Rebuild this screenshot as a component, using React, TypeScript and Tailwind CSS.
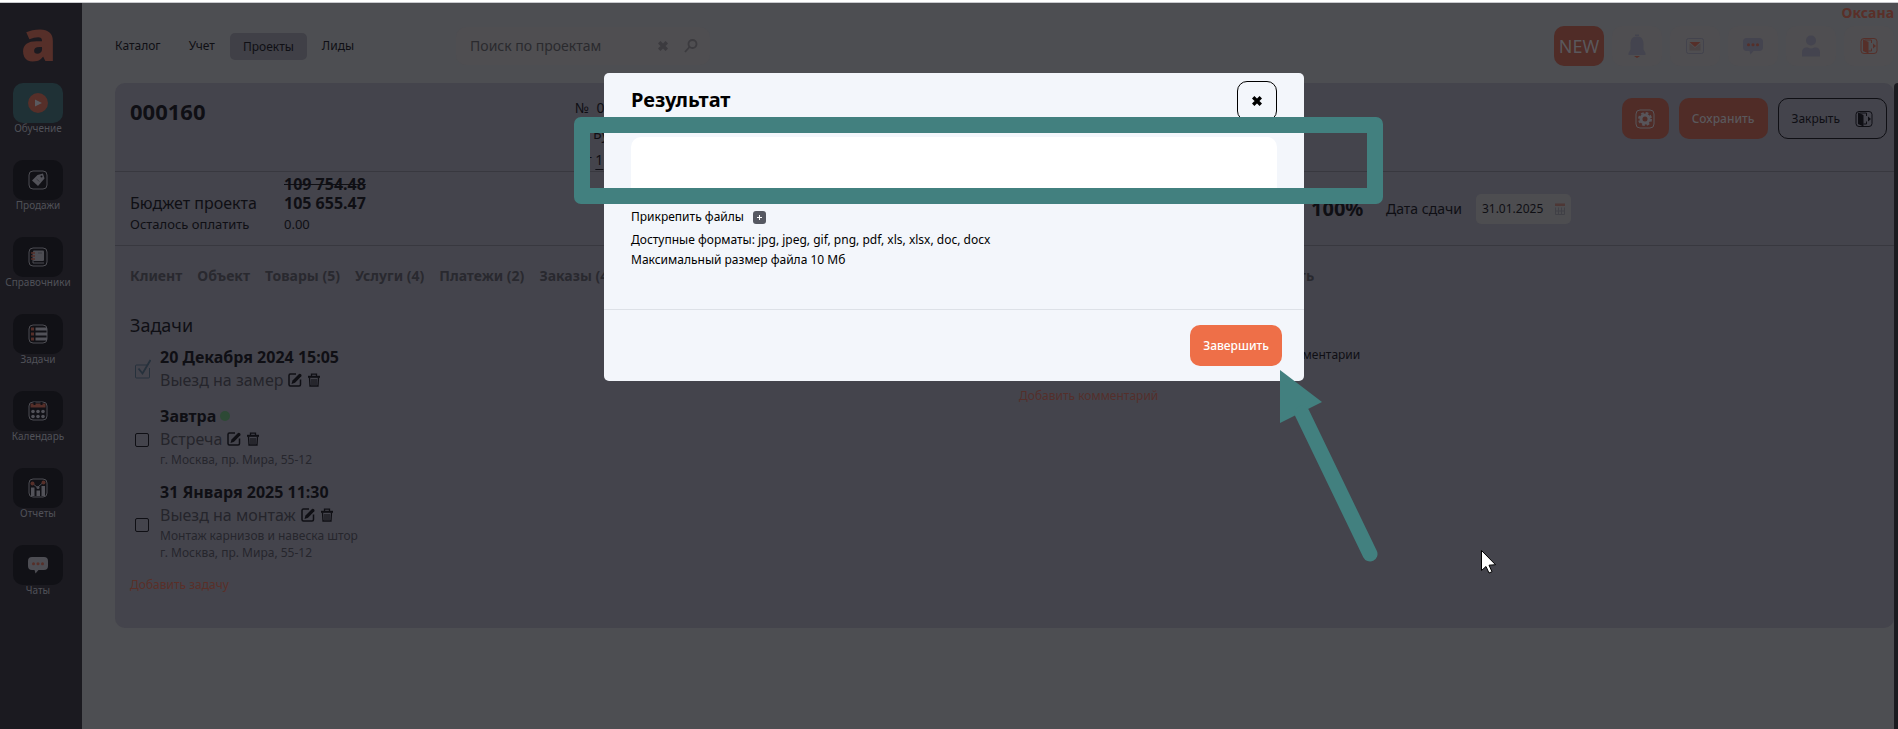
import { useState } from 'react'
import type { ReactNode } from 'react'

interface Task {
  id: number
  date: string
  title: string
  lines: string[]
  done?: boolean
  dot?: boolean
}

const tasks: Task[] = [
  { id: 1, date: '20 Декабря 2024 15:05', title: 'Выезд на замер', lines: [], done: true },
  { id: 2, date: 'Завтра', title: 'Встреча', lines: ['г. Москва, пр. Мира, 55-12'], dot: true },
  {
    id: 3,
    date: '31 Января 2025 11:30',
    title: 'Выезд на монтаж',
    lines: ['Монтаж карнизов и навеска штор', 'г. Москва, пр. Мира, 55-12'],
  },
]

const tabs = ['Клиент', 'Объект', 'Товары (5)', 'Услуги (4)', 'Платежи (2)', 'Заказы (4)']

/* ---------- icons ---------- */

function Frame({ children }: { children: ReactNode }) {
  return (
    <svg className="w-5 h-5" viewBox="0 0 20 20" fill="none">
      <rect x="1" y="1" width="18" height="18" rx="4" stroke="#4d4d53" />
      {children}
    </svg>
  )
}

function PlayIcon() {
  return (
    <svg className="w-5 h-5" viewBox="0 0 20 20">
      <circle cx="10" cy="10" r="10" fill="#562f29" />
      <path d="M7 6.500l7 3.500-7 3.500z" fill="#5a5a60" />
    </svg>
  )
}

function TagIcon() {
  return (
    <Frame>
      <path d="M9.500 5l5.500-1.500 1.500 5-6.500 7.500-6-5.500z" fill="#525259" />
      <circle cx="13.500" cy="6.500" r="1" fill="#111116" />
      <path d="M8.500 9l3 2.500" stroke="#3a3b41" />
    </Frame>
  )
}

function BookIcon() {
  return (
    <Frame>
      <rect x="5" y="3.500" width="11" height="10.500" rx="1" fill="#4d4d53" />
      <path d="M5 16h11" stroke="#4d4d53" />
      <path d="M5 5v11" stroke="#4d4d53" />
      <path d="M3 6h4M3 9h4M3 12h4" stroke="#562f29" strokeWidth="1.500" />
      <path d="M10 6h4" stroke="#3a3b41" />
    </Frame>
  )
}

function ListIcon() {
  return (
    <Frame>
      <path d="M7.500 5H19M7.500 10H19M7.500 15H19" stroke="#525259" strokeWidth="3" />
      <path d="M4.500 3.500v13.500" stroke="#562f29" strokeWidth="3" strokeDasharray="3 2" />
    </Frame>
  )
}

function CalendarIcon() {
  return (
    <Frame>
      <path d="M2.500 2.500h15v4h-15z" fill="#562f29" />
      <path d="M6.500 1v3M13.500 1v3" stroke="#111116" strokeWidth="2" />
      <g fill="#525259">
        <circle cx="5" cy="10.500" r="1.800" />
        <circle cx="10" cy="10.500" r="1.800" />
        <circle cx="15" cy="10.500" r="1.800" />
        <circle cx="5" cy="15.500" r="1.800" />
        <circle cx="10" cy="15.500" r="1.800" />
        <circle cx="15" cy="15.500" r="1.800" />
      </g>
    </Frame>
  )
}

function ChartIcon() {
  return (
    <Frame>
      <path d="M3 9.500h3.500V18H3zM8.500 12.500H12V18H8.500zM13.500 8H17v10h-3.500z" fill="#525259" />
      <path d="M4 5l5.500 4.500L16 3.500" stroke="#4d4d53" />
      <circle cx="4.500" cy="5.500" r="2" fill="#562f29" />
      <circle cx="10" cy="9.500" r="1.500" fill="#4d4d53" />
      <circle cx="15.500" cy="4.500" r="2" fill="#562f29" />
    </Frame>
  )
}

function ChatIcon({ fill }: { fill: string }) {
  return (
    <svg className="w-5 h-[18px]" viewBox="0 0 20 18">
      <path
        d="M4 1h12q4 0 4 4v5q0 4-4 4h-5.500L7.500 17.500 6.500 14H4q-4 0-4-4V5q0-4 4-4z"
        fill={fill}
      />
      <g fill="#562f29">
        <circle cx="5.500" cy="7.800" r="1.500" />
        <circle cx="10" cy="7.800" r="1.500" />
        <circle cx="14.500" cy="7.800" r="1.500" />
      </g>
    </svg>
  )
}

function BellIcon() {
  return (
    <svg className="w-[18px] h-6" viewBox="0 0 18 24">
      <path d="M7 .5h4v1.500H7z" fill="#44444f" />
      <path d="M9 2.500c-5 0-6.500 3.500-6.500 8v5L.500 19v2h17v-2l-2-3.500v-5c0-4.500-1.500-8-6.500-8z" fill="#44444f" />
      <path d="M6 22h6l-3 2z" fill="#562f29" />
    </svg>
  )
}

function MailIcon() {
  return (
    <svg className="w-[18px] h-4" viewBox="0 0 18 16" fill="none">
      <rect x=".5" y=".5" width="17" height="15" rx="2" stroke="#43434d" />
      <path d="M3.500 12.500v-7L9 10l5.500-4.500v7z" fill="#4a4344" />
      <path d="M3.500 4h11L9 9z" fill="#562f29" />
    </svg>
  )
}

function UserIcon() {
  return (
    <svg className="w-[18px] h-[22px]" viewBox="0 0 18 22" fill="#44444f">
      <circle cx="9" cy="5.500" r="5" />
      <path d="M0 21.500v-4Q0 12 5.500 12.500q3.500 2 7 0Q18 12 18 17.500v4z" />
    </svg>
  )
}

function DoorIcon({ color }: { color: string }) {
  return (
    <svg className="w-[18px] h-4" viewBox="0 0 18 16" fill="none">
      <rect x="1" y=".5" width="16" height="15" rx="3" stroke={color} />
      <path d="M3 1.500L8.500 4v11.500L3 13z" fill={color} />
      <path d="M4.500 2h7v3M11.500 10.500V13H8.500" stroke={color} />
      <path d="M13 5.500L16 8l-3 2.500z" fill={color} />
    </svg>
  )
}

function GearIcon() {
  return (
    <svg className="w-5 h-5" viewBox="0 0 20 20" fill="none" stroke="#58565b">
      <rect x="1" y="1" width="18" height="18" rx="4" />
      <circle cx="10" cy="10" r="4" strokeWidth="3" />
      <circle cx="10" cy="10" r="6" strokeWidth="2" strokeDasharray="2.700 2.012" />
    </svg>
  )
}

function EditIcon() {
  return (
    <svg className="w-3.5 h-3.5" viewBox="0 0 14 14" fill="none">
      <path d="M8 1H2.500Q1 1 1 2.500v9Q1 13 2.500 13h8.500q1.500 0 1.500-1.500V6.500" stroke="#0f0f14" strokeWidth="1.500" />
      <path d="M3.500 11l1-3.500L11 1q1-.700 2 .3t.3 2L7 9.800z" fill="#0f0f14" />
    </svg>
  )
}

function TrashIcon() {
  return (
    <svg className="w-3.5 h-3.5" viewBox="0 0 14 14" fill="none" stroke="#0f0f14">
      <path d="M1 3.800h12" strokeWidth="2" />
      <path d="M4.500 3V1.200h5V3" strokeWidth="1.300" />
      <path d="M2.500 4.500l.5 8.500h8l.5-8.500" strokeWidth="1.300" />
      <path d="M5 6v6M7 6v6M9 6v6" strokeWidth="1.100" />
    </svg>
  )
}

function SmallCalendarIcon() {
  return (
    <svg className="w-2.5 h-3" viewBox="0 0 10 12" fill="none">
      <path d="M0 .5h10V3H0z" fill="#4d3735" />
      <path d="M.5 4.500v7h9v-7M.5 8h9M3.500 4.500v7M6.500 4.500v7" stroke="#404046" />
    </svg>
  )
}

function CrossIcon() {
  return (
    <svg className="w-2.5 h-2.5" viewBox="0 0 10 10" stroke="currentColor" strokeWidth="3.400">
      <path d="M1.200 1.200l7.600 7.600M8.800 1.200L1.200 8.800" />
    </svg>
  )
}

/* ---------- page ---------- */

const menu: { label: string; icon: ReactNode; active?: boolean }[] = [
  { label: 'Обучение', icon: <PlayIcon />, active: true },
  { label: 'Продажи', icon: <TagIcon /> },
  { label: 'Справочники', icon: <BookIcon /> },
  { label: 'Задачи', icon: <ListIcon /> },
  { label: 'Календарь', icon: <CalendarIcon /> },
  { label: 'Отчеты', icon: <ChartIcon /> },
  { label: 'Чаты', icon: <ChatIcon fill="#4d4d53" /> },
]

function Sidebar() {
  return (
    <aside className="w-[82px] shrink-0 bg-[#1b1a20] flex flex-col">
      <a href="#" aria-label="Главная" className="h-20 pl-[21px] text-[57px] leading-[72px] font-black text-[#562f29]">
        a
      </a>
      <nav className="flex flex-col gap-[21px] pr-[6px]">
        {menu.map((item) => (
          <a key={item.label} href="#" className="h-14 flex flex-col items-center">
            <span
              className={`w-[50px] h-10 shrink-0 rounded-[10px] flex items-center justify-center ${
                item.active ? 'bg-[#1f3136]' : 'bg-[#111116]'
              }`}
            >
              {item.icon}
            </span>
            <span className="text-[10px] leading-[10px] text-[#505158]">{item.label}</span>
          </a>
        ))}
      </nav>
    </aside>
  )
}

function Header() {
  return (
    <header className="h-20 flex items-start justify-between pl-[33px]">
      <div className="flex items-start pt-6">
        <nav className="flex items-center h-[38px] text-xs text-[#0f0f14]">
          <a href="#">Каталог</a>
          <a href="#" className="ml-7">Учет</a>
          <a href="#" className="ml-[15px] h-[27px] px-[13px] leading-[27px] rounded-[5px] bg-[#404047]">Проекты</a>
          <a href="#" className="ml-[15px]">Лиды</a>
        </nav>
        <div className="ml-[102px] w-[254px] h-[38px] pl-[14px] pr-3 rounded-[10px] bg-[#4f4e51] flex items-center text-[#3c3b3f]">
          <input
            type="text"
            aria-label="Поиск по проектам"
            placeholder="Поиск по проектам"
            className="flex-1 min-w-0 text-sm bg-transparent outline-none placeholder:text-[#2a2a2e]"
          />
          <button aria-label="Очистить" className="mr-4">
            <CrossIcon />
          </button>
          <button aria-label="Найти">
            <svg className="w-3.5 h-3.5" viewBox="0 0 14 14" fill="none" stroke="currentColor" strokeWidth="1.800">
              <circle cx="8.500" cy="5" r="4" />
              <path d="M5.500 8L1 13" />
            </svg>
          </button>
        </div>
      </div>
      <div className="flex flex-col items-end pr-1">
        <span className="text-sm leading-5 font-bold text-[#5a2f28]">Оксана</span>
        <div className="mt-[3px] flex gap-2">
          <button className="w-[50px] h-10 rounded-[10px] bg-[#502c27] text-lg text-[#5a585c]">NEW</button>
          <button aria-label="Уведомления" className="w-[50px] h-10 rounded-[10px] bg-[#4f4e51] flex items-center justify-center">
            <BellIcon />
          </button>
          <button aria-label="Почта" className="w-[50px] h-10 rounded-[10px] bg-[#4f4e51] flex items-center justify-center">
            <MailIcon />
          </button>
          <button aria-label="Сообщения" className="w-[50px] h-10 rounded-[10px] bg-[#4f4e51] flex items-center justify-center">
            <ChatIcon fill="#44444f" />
          </button>
          <button aria-label="Профиль" className="w-[50px] h-10 rounded-[10px] bg-[#4f4e51] flex items-center justify-center">
            <UserIcon />
          </button>
          <button aria-label="Выход" className="w-[50px] h-10 rounded-[10px] bg-[#4f4e51] flex items-center justify-center">
            <DoorIcon color="#562f29" />
          </button>
        </div>
      </div>
    </header>
  )
}

function TaskRow({ task }: { task: Task }) {
  return (
    <li className="flex items-center">
      {task.done ? (
        <label className="w-[30px] pl-[5px]">
          <input type="checkbox" defaultChecked aria-label={task.title} className="sr-only" />
          <svg className="w-4 h-5" viewBox="0 0 16 20" fill="none" stroke="#26313c">
            <path d="M12 6H1.500q-1 0-1 1v11q0 1 1 1h12q1 0 1-1v-9" />
            <path d="M3.500 9.500l4 5L15.500 1" strokeWidth="1.800" />
          </svg>
        </label>
      ) : (
        <label className="w-[30px] pl-[5px] pt-[7px] flex">
          <input
            type="checkbox"
            aria-label={task.title}
            className="appearance-none w-3.5 h-3.5 rounded-xs border border-[#0f0f14]"
          />
        </label>
      )}
      <div>
        <div className="flex items-center gap-1 text-base leading-[22px] font-bold text-[#0f0f14]">
          {task.date}
          {task.dot && <span className="w-2.5 h-2.5 rounded-full bg-[#2d4935]" />}
        </div>
        <div className="flex items-center text-base leading-6 text-[#25252b]">
          {task.title}
          <button aria-label="Изменить" className="ml-[5px]">
            <EditIcon />
          </button>
          <button aria-label="Удалить" className="ml-[5px]">
            <TrashIcon />
          </button>
        </div>
        {task.lines.map((line) => (
          <div key={line} className="text-xs leading-[17px] text-[#26262c]">{line}</div>
        ))}
      </div>
    </li>
  )
}

function Project() {
  return (
    <main className="ml-[33px] h-[545px] rounded-[10px] bg-[#44444c] text-[#0f0f14]">
      <div className="h-[89px] grid grid-cols-[460fr_721fr_598fr] border-b border-[#38383f]">
        <h1 className="pl-[15px] pt-3.5 text-[22px] leading-7 font-bold">000160</h1>
        <div className="text-sm leading-[26px] pt-3">
          <div>№&nbsp; 0</div>
          <div className="pl-[18px]">Бу</div>
          <div className="pl-[2px]">
            от <span className="underline underline-offset-4">1</span>
          </div>
        </div>
        <div className="flex items-start justify-end gap-2.5 pt-[15px] pr-[7px] text-xs">
          <button aria-label="Настройки" className="w-[47px] h-[41px] rounded-[10px] bg-[#502c27] flex items-center justify-center">
            <GearIcon />
          </button>
          <button className="h-[41px] px-[13px] rounded-[10px] bg-[#502c27] font-medium text-[#5a585c]">Сохранить</button>
          <button className="h-[41px] px-[13px] rounded-[10px] border border-[#0f0f14] flex items-center gap-[15px]">
            Закрыть
            <DoorIcon color="#0f0f14" />
          </button>
        </div>
      </div>

      <div className="h-[74px] grid grid-cols-[1181fr_598fr] border-b border-[#38383f]">
        <div className="pl-[15px] pt-[3px] grid grid-cols-[154px_1fr] content-start items-end">
          <span className="text-base leading-[19px]">Бюджет проекта</span>
          <span className="text-base leading-[19px] font-bold">
            <s>109 754.48</s>
            <br />
            105 655.47
          </span>
          <span className="text-[13px] leading-[22px]">Осталось оплатить</span>
          <span className="text-[13px] leading-[22px]">0.00</span>
        </div>
        <div className="flex items-center pl-[15px] text-sm">
          <span className="w-[75px] text-xl leading-6 font-bold">100%</span>
          <label htmlFor="due">Дата сдачи</label>
          <div className="ml-3.5 w-[95px] h-[30px] px-[6px] rounded-[5px] bg-[#4d4d50] flex items-center justify-between">
            <input id="due" type="text" defaultValue="31.01.2025" className="w-[66px] outline-none text-xs" />
            <SmallCalendarIcon />
          </div>
        </div>
      </div>

      <nav className="grid grid-cols-[1148fr_631fr] pt-[19px] text-sm leading-[22px] font-bold text-[#29292f]">
        <div className="flex gap-[15px] pl-[15px]">
          {tabs.map((tab) => (
            <a key={tab} href="#">{tab}</a>
          ))}
        </div>
        <a href="#">Печать</a>
      </nav>

      <div className="grid grid-cols-[904fr_875fr]">
        <section className="pl-[15px] pt-[25px]">
          <h2 className="text-lg leading-[26px]">Задачи</h2>
          <ul className="mt-2 flex flex-col gap-[13px]">
            {tasks.map((task) => (
              <TaskRow key={task.id} task={task} />
            ))}
          </ul>
          <a href="#" className="block mt-[15px] text-xs leading-[17px] text-[#5a2f28]">Добавить задачу</a>
        </section>
        <section className="pt-[58px] text-xs">
          <div className="pl-[260px] leading-5">Комментарии</div>
          <a href="#" className="block mt-[22px] leading-[17px] text-[#542f2b]">Добавить комментарий</a>
        </section>
      </div>
    </main>
  )
}

function ResultDialog() {
  const [text, setText] = useState('')

  return (
    <div className="absolute inset-0 pt-[73px] pl-2.5 flex items-start justify-center">
      <div role="dialog" aria-labelledby="result-title" className="relative w-[700px] rounded-[5px] bg-[#f3f6fb] text-black text-xs">
        <div className="h-16 px-[27px] pt-2 flex items-start justify-between">
          <h2 id="result-title" className="text-xl leading-[38px] font-bold">Результат</h2>
          <button aria-label="Закрыть окно" className="w-10 h-10 rounded-[10px] border border-black flex items-center justify-center">
            <CrossIcon />
          </button>
        </div>
        <div className="px-[27px] h-[172px]">
          <textarea
            aria-label="Результат"
            value={text}
            onChange={(e) => setText(e.target.value)}
            className="block w-full h-[60px] resize-none rounded-[10px] bg-white p-2.5 outline-none"
          />
          <div className="mt-[11px] flex items-center gap-[9px] leading-[18px]">
            Прикрепить файлы
            <button aria-label="Добавить файл" className="w-[13px] h-[13px] rounded-[3px] bg-[#555861] text-white flex items-center justify-center">
              <svg className="w-[5px] h-[5px]" viewBox="0 0 5 5" stroke="currentColor">
                <path d="M2.500 0v5M0 2.500h5" />
              </svg>
            </button>
          </div>
          <p className="mt-1 leading-5">Доступные форматы: jpg, jpeg, gif, png, pdf, xls, xlsx, doc, docx</p>
          <p className="leading-5">Максимальный размер файла 10 Мб</p>
        </div>
        <div className="h-[72px] border-t border-[#dde1e7] pt-[15px] pr-[22px] flex items-start justify-end">
          <button className="h-[41px] px-[13px] rounded-[10px] bg-[#ee6f48] font-medium text-white">Завершить</button>
        </div>

        {/* highlight frame and arrow over the dialog */}
        <div className="absolute -left-[30px] top-11 w-[809px] h-[87px] rounded-[7px] border-16 border-[#42807f] pointer-events-none" />
        <svg className="absolute left-[676px] top-[297px] w-[100px] h-[194px] pointer-events-none" viewBox="0 0 100 194">
          <path d="M0 0L42 32 0 53z" fill="#42807f" />
          <path d="M22 43L90 184" stroke="#42807f" strokeWidth="15" strokeLinecap="round" />
        </svg>
        <svg className="absolute left-[877px] top-[477px] w-4 h-6 pointer-events-none" viewBox="0 0 16 24">
          <path d="M.500.500v20l4.500-4 3 6.500 3-1.300-3-6.500 6.500-.500z" fill="#fff" stroke="#000" />
        </svg>
      </div>
    </div>
  )
}

export default function App() {
  return (
    <div className="relative min-h-screen flex flex-col bg-[#4d4e52] overflow-hidden font-['Noto_Sans',sans-serif]">
      <div className="h-[3px] bg-white border-b border-[#c9cace]" />
      <div className="flex-1 flex">
        <Sidebar />
        <div className="flex-1 min-w-0 flex flex-col">
          <Header />
          <div className="flex-1 flex">
            <div className="flex-1 min-w-0">
              <Project />
            </div>
            <div className="w-1 rounded-tl-[4px] bg-[#1a1b20]" />
          </div>
        </div>
      </div>
      <ResultDialog />
    </div>
  )
}
